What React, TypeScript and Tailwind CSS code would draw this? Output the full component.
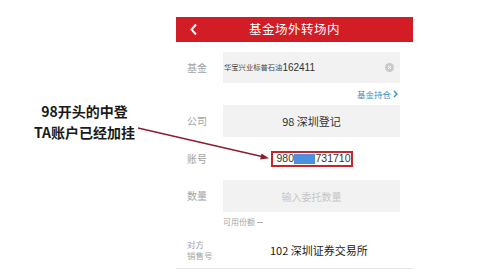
import React from 'react'

const cjk = { fontFamily: '"Noto Sans CJK SC", "Noto Sans", sans-serif' }

function Label({ children }: { children: React.ReactNode }) {
  return (
    <div className="w-[47px] shrink-0 pl-[11px] text-[10px] leading-[12px] text-[#a3a3a3]">
      {children}
    </div>
  )
}

export default function App() {
  return (
    <div className="relative flex h-[271px] w-[500px] overflow-hidden bg-white" style={cjk}>
      {/* annotation */}
      <div className="w-[176px] shrink-0 pr-[7px] pt-[101px] text-center text-[14px] font-bold leading-[21px] text-[#1a1a1a]">
        <div>98开头的中登</div>
        <div>TA账户已经加挂</div>
      </div>

      {/* phone screen */}
      <div className="flex w-[237px] shrink-0 flex-col pt-[17px]">
        <div className="relative flex h-[25px] items-center justify-center bg-[#d21d26]">
          <svg className="absolute left-[13px] top-[6px]" width="10" height="13" viewBox="0 0 10 13">
            <polyline points="7,1.5 2.5,6.5 7,11.5" fill="none" stroke="white" strokeWidth="2" />
          </svg>
          <span className="text-[12.5px] tracking-[0.5px] text-white">基金场外转场内</span>
        </div>

        {/* 基金 */}
        <div className="mt-[10px] flex h-[31px] items-center">
          <Label>基金</Label>
          <div className="flex h-full w-[177px] items-center bg-[#f2f2f2] pl-[1px] pr-[6px]">
            <span className="text-[7.3px] text-[#444]">华宝兴业标普石油</span>
            <span className="text-[10px] text-[#333]" style={{ fontFamily: '"Liberation Sans", sans-serif' }}>162411</span>
            <span className="ml-auto flex h-[9px] w-[9px] items-center justify-center rounded-full bg-[#c9c9c9]">
              <svg width="5" height="5" viewBox="0 0 5 5">
                <path d="M1 1L4 4M4 1L1 4" stroke="white" strokeWidth="1" />
              </svg>
            </span>
          </div>
        </div>

        <div className="flex h-[22px] items-center justify-end pr-[15px] text-[8.5px] text-[#3a8ec8]">
          <span>基金持仓</span>
          <svg className="ml-[2px]" width="5" height="8" viewBox="0 0 5 8">
            <polyline points="1,1 4,4 1,7" fill="none" stroke="#3a8ec8" strokeWidth="1.4" />
          </svg>
        </div>

        {/* 公司 */}
        <div className="flex h-[32px] items-center">
          <Label>公司</Label>
          <div className="flex h-full w-[177px] items-center justify-center bg-[#f2f2f2] text-[11px] text-[#333]">
            98 深圳登记
          </div>
        </div>

        {/* 账号 */}
        <div className="flex h-[43px] items-center">
          <Label>账号</Label>
          <div className="flex w-[177px] justify-center">
            <div className="flex h-[16px] w-[82px] items-center border-2 border-[#c4262e] pl-[4px] text-[10.5px] leading-none text-[#333]" style={{ fontFamily: '"Liberation Sans", sans-serif' }}>
              <span>980</span>
              <span className="h-[10px] w-[28px] bg-[#4a90dc]" />
              <span>731710</span>
            </div>
          </div>
        </div>

        {/* 数量 */}
        <div className="flex h-[32px] items-center">
          <Label>数量</Label>
          <div className="flex h-full w-[177px] items-center justify-center bg-[#f2f2f2] text-[10px] text-[#c6c6c6]">
            输入委托数量
          </div>
        </div>

        <div className="flex h-[20px] items-center pl-[47px] text-[8px] text-[#a8a8a8]">
          可用份额 <span className="ml-[2px] font-bold text-[#888]">--</span>
        </div>

        {/* 对方销售号 */}
        <div className="flex h-[37px] items-center border-b border-[#e6e6e6]">
          <div className="w-[47px] shrink-0 pl-[11px] text-[8.5px] leading-[11px] text-[#a3a3a3]">
            <div>对方</div>
            <div>销售号</div>
          </div>
          <div className="pl-[47px] text-[11px] text-[#222]">102 深圳证券交易所</div>
        </div>
      </div>

      {/* arrow */}
      <svg className="pointer-events-none absolute left-0 top-0" width="500" height="271" viewBox="0 0 500 271">
        <line x1="138" y1="128" x2="264" y2="157" stroke="#8c1c2c" strokeWidth="1.3" />
        <polygon points="269,158.2 261.5,153.6 260.2,159.4" fill="#8c1c2c" />
      </svg>
    </div>
  )
}
